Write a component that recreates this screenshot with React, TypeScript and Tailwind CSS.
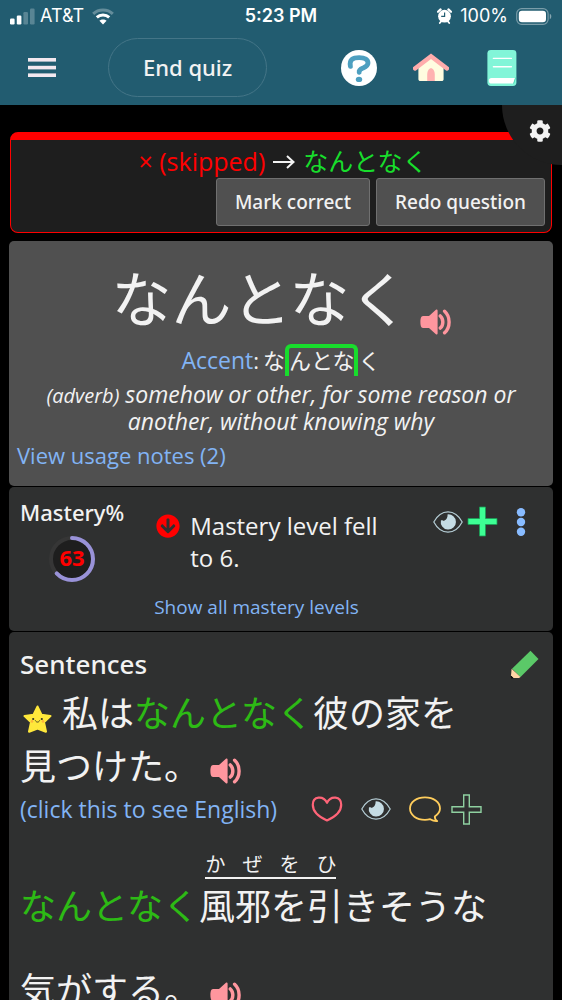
import React from 'react';
import { FaCog, FaArrowCircleDown } from 'react-icons/fa';

const MenuIcon: React.FC = () => (
  <svg width="28" height="20" viewBox="0 0 28 20" fill="#f3e8ef">
    <rect y="0" width="28" height="3.6" />
    <rect y="7.8" width="28" height="3.6" />
    <rect y="15.4" width="28" height="3.6" />
  </svg>
);

const SignalIcon: React.FC = () => (
  <svg width="26" height="17" viewBox="0 0 26 17" fill="#fff">
    <rect x="0" y="10.5" width="4.6" height="6" rx="1.2" />
    <rect x="6.8" y="7.5" width="4.6" height="9" rx="1.2" />
    <rect x="13.4" y="4" width="4.6" height="12.5" rx="1.2" opacity=".25" />
    <rect x="20" y="0.5" width="4.6" height="16" rx="1.2" opacity=".25" />
  </svg>
);

const WifiIcon: React.FC = () => (
  <svg width="22" height="17" viewBox="0 0 22 17" fill="none" strokeWidth="3">
    <path d="M1.2 5.8C6.5.7 15.5.7 20.8 5.8" stroke="#fff" opacity=".3" />
    <path d="M4.8 9.4C8.2 6.2 13.8 6.2 17.2 9.4" stroke="#fff" />
    <path d="M11 16.6 7.4 12.8C9.3 11 12.7 11 14.6 12.8Z" fill="#fff" />
  </svg>
);

const AlarmIcon: React.FC = () => (
  <svg width="15" height="16" viewBox="0 0 15 16">
    <circle cx="7.5" cy="8.2" r="6.4" fill="#fff" />
    <path d="M1 3.8 3.6 1.4M14 3.8 11.4 1.4" stroke="#fff" strokeWidth="2.2" strokeLinecap="round" />
    <path d="m2.8 15 1.6-2M12.2 15l-1.6-2" stroke="#fff" strokeWidth="1.8" strokeLinecap="round" />
    <path d="M7.6 4.4v4H4.2" fill="none" stroke="#225c70" strokeWidth="1.2" />
  </svg>
);

const BatteryIcon: React.FC = () => (
  <svg width="36" height="17" viewBox="0 0 36 17">
    <rect x=".7" y=".7" width="31.4" height="15.6" rx="5" fill="none" stroke="#fff" strokeWidth="1.2" opacity=".4" />
    <rect x="2.8" y="2.8" width="27.2" height="11.4" rx="3.2" fill="#fff" />
    <path d="M33.8 5.8v5.4c2-.8 2-4.6 0-5.4Z" fill="#fff" opacity=".45" />
  </svg>
);

const HelpIcon: React.FC = () => (
  <svg width="36" height="36" viewBox="0 0 36 36">
    <circle cx="18" cy="18" r="18" fill="#fff" />
    <path
      d="M9.4 16.4C8 9.4 12 7.6 18.2 7.6c5.8 0 8.8 2.2 8.8 5.4 0 3-2.6 4-5 5-2.6 1-4.2 2-3.8 4.4"
      fill="none"
      stroke="#4d9fc0"
      strokeWidth="4.8"
      strokeLinecap="round"
    />
    <ellipse cx="18" cy="29.4" rx="3.2" ry="2.6" fill="#4d9fc0" />
  </svg>
);

const HomeIcon: React.FC = () => (
  <svg width="36" height="29" viewBox="0 0 36 29">
    <path d="M18 3.5 30.6 13v13.2c0 1-.8 1.8-1.8 1.8H7.2c-1 0-1.8-.8-1.8-1.8V13Z" fill="#fffce0" />
    <path d="M14.2 28v-6c0-9 7.6-9 7.6 0v6Z" fill="#ffb1b1" />
    <path d="M2 15.4 18 3.2l16 12.2" fill="none" stroke="#ffacac" strokeWidth="4.4" strokeLinecap="round" />
  </svg>
);

const BookIcon: React.FC = () => (
  <svg width="30" height="36" viewBox="0 0 30 36">
    <rect x=".4" width="29" height="36" rx="3.4" fill="#82f5d8" />
    <path d="M6.4 8.4h18M6.4 16.8h18" stroke="#fff" strokeWidth="1.4" strokeLinecap="round" />
    <path d="M4.6 28h24c-1.4 1.6-1 3.4-2.4 5.6H4.6a2.8 2.8 0 0 1 0-5.6Z" fill="#fff" />
    <path d="m28.6 27.6-2 6" stroke="#28c7a0" strokeWidth=".7" />
  </svg>
);

const SpeakerIcon: React.FC = () => (
  <svg width="31" height="26" viewBox="0 0 31 26">
    <path d="M17.6 1.4v23.2c0 .9-1 1.2-1.7.6L9 19H3C1 19 .4 16.2.4 13S1 7 3 7h6L15.9.8c.7-.6 1.7-.3 1.7.6Z" fill="#ff969e" />
    <path
      d="M20.3 6.9c3.4 3 3.4 9.2 0 12.2M24.6 2.2c6 5.4 6 16.2 0 21.6"
      fill="none"
      stroke="#ff969e"
      strokeWidth="3.4"
      strokeLinecap="round"
    />
  </svg>
);

const EyeIcon: React.FC = () => (
  <svg width="30" height="22" viewBox="0 0 30 22">
    <path
      d="M.8 11C4.5 4 9.5.8 15 .8S25.5 4 29.2 11C25.5 18 20.5 21.2 15 21.2S4.5 18 .8 11Z"
      fill="none"
      stroke="#b5cdd5"
      strokeWidth="1.2"
    />
    <path d="M14.5 3.4a7.6 7.6 0 1 1-6.6 6c.8 0 1.8-.2 2.2.4 2.6-.4 4.8-2.6 4.4-6.4Z" fill="#c5dce4" />
  </svg>
);

const PlusIcon: React.FC = () => (
  <svg width="31" height="31" viewBox="0 0 31 31">
    <path d="M12.5 1h6v11.5H30v6H18.5V30h-6V18.5H1v-6h11.5Z" fill="#3dff94" stroke="#1c9b56" strokeWidth=".8" />
  </svg>
);

const PlusOutlineIcon: React.FC = () => (
  <svg width="31" height="31" viewBox="0 0 31 31">
    <path
      d="M12.7 1h5.6v11.7H30v5.6H18.3V30h-5.6V18.3H1v-5.6h11.7Z"
      fill="none"
      stroke="#8fd0a0"
      strokeWidth="1.4"
    />
  </svg>
);

const DotsIcon: React.FC = () => (
  <svg width="10" height="28" viewBox="0 0 10 28" fill="#88bbff">
    <circle cx="5" cy="4.2" r="4.2" />
    <circle cx="5" cy="14" r="4.2" />
    <circle cx="5" cy="23.8" r="4.2" />
  </svg>
);

const PencilIcon: React.FC = () => (
  <svg width="29" height="29" viewBox="0 0 29 29">
    <path d="M20.5.8 28.5 9 10.5 27 2 18.8Z" fill="#5bc968" />
    <path d="M1.6 18.8 10.5 27 9 28H.8Z" fill="#ffd6a6" />
    <path d="m1 26 2.2 2H1Z" fill="#111" stroke="#111" />
  </svg>
);

const StarIcon: React.FC = () => (
  <svg width="29" height="28" viewBox="0 0 29 28">
    <path
      d="M14.5 1.6 18.4 9.8l9 1.2-6.5 6.2 2 9.4-8.4-3.2-8.4 3.2 2-9.4L1.6 11l9-1.2Z"
      fill="#ffe83b"
      stroke="#ffe83b"
      strokeWidth="2.2"
      strokeLinejoin="round"
    />
    <circle cx="10.2" cy="14" r="1.1" fill="#332" />
    <circle cx="18.8" cy="14" r="1.1" fill="#332" />
    <path d="M12.3 15.4c.8 2.2 3.6 2.2 4.4 0" fill="none" stroke="#332" strokeWidth=".9" />
    <circle cx="9" cy="16.4" r="1.3" fill="#ffb63b" />
    <circle cx="20" cy="16.4" r="1.3" fill="#ffb63b" />
  </svg>
);

const HeartIcon: React.FC = () => (
  <svg width="32" height="26" viewBox="0 0 32 26">
    <path
      d="M16 6.8C12.4-.6 1.8-.2 1.8 8.8c0 7.2 7.2 12.6 14.2 15.6 7-3 14.2-8.4 14.2-15.6C30.2-.2 19.6-.6 16 6.8Z"
      fill="none"
      stroke="#ff6478"
      strokeWidth="2.2"
      strokeLinejoin="round"
    />
  </svg>
);

const CommentIcon: React.FC = () => (
  <svg width="32" height="27" viewBox="0 0 32 27">
    <path
      d="M25.8 20.6C28.8 18.6 31 16 31 12.6 31 6 24.4 1.4 16 1.4S1 6 1 12.6s6.6 11.2 15 11.2c1.8 0 3.6-.2 5.2-.6 2 1.2 4.6 2 7 1.8-1.6-.8-2.4-2.2-2.4-4.4Z"
      fill="none"
      stroke="#ffcd5c"
      strokeWidth="1.8"
      strokeLinejoin="round"
    />
  </svg>
);

const MasteryRing: React.FC<{ value: number }> = ({ value }) => (
  <div className="grid size-12 place-items-center">
    <svg width="48" height="48" viewBox="0 0 48 48" className="col-start-1 row-start-1">
      <circle cx="24" cy="24" r="21" fill="#1e1e1e" stroke="#363636" strokeWidth="4" />
      <circle
        cx="24"
        cy="24"
        r="21"
        fill="none"
        stroke="#9992d8"
        strokeWidth="4"
        strokeLinecap="round"
        pathLength="100"
        strokeDasharray={`${value} 100`}
        transform="rotate(-90 24 24)"
      />
    </svg>
    <span className="col-start-1 row-start-1 pb-1 text-[22px] leading-6 font-bold text-[#ff0000]">{value}</span>
  </div>
);

const Header: React.FC = () => (
  <header className="shrink-0 bg-[#225c70]">
    <div className="grid grid-cols-3 items-center px-[10px] pt-1 font-['Inter',sans-serif] text-lg leading-6 text-white">
      <div className="flex items-center gap-2">
        <SignalIcon />
        <span className="-ml-1">AT&amp;T</span>
        <WifiIcon />
      </div>
      <div className="text-center font-semibold">5:23 PM</div>
      <div className="flex items-center justify-end gap-2">
        <AlarmIcon />
        <span>100%</span>
        <BatteryIcon />
      </div>
    </div>
    <nav className="flex items-center justify-between pt-[10px] pr-[45px] pb-2 pl-7">
      <div className="flex items-center gap-[52px]">
        <button aria-label="Menu">
          <MenuIcon />
        </button>
        <button className="h-[59px] rounded-full border border-[#447587] px-[34px] font-['Noto_Sans',sans-serif] text-[22px] font-medium text-[#f2f2f2]">
          End quiz
        </button>
      </div>
      <div className="flex items-center gap-9">
        <button aria-label="Help">
          <HelpIcon />
        </button>
        <a href="#home" aria-label="Home">
          <HomeIcon />
        </a>
        <a href="#notes" aria-label="Notebook" className="pl-[2px]">
          <BookIcon />
        </a>
      </div>
    </nav>
  </header>
);

const Result: React.FC = () => (
  <section className="mx-[10px] rounded-lg border border-t-8 border-[#ff0000] bg-[#1e1e1e] px-[6px] pt-[5px] pb-[6px]">
    <p className="flex items-center justify-center gap-2 pl-1 text-[25px] leading-[33px] text-[#ff0000]">
      <span>× (skipped)</span>
      <svg width="22" height="14" viewBox="0 0 22 14" fill="none" stroke="#f2f2f2" strokeWidth="2">
        <path d="M0 7h20M14 1l6.5 6-6.5 6" />
      </svg>
      <span className="text-[#18dd2c]">なんとなく</span>
    </p>
    <div className="flex justify-end gap-[6px] font-['Noto_Sans',sans-serif] text-[19px] font-medium text-[#f2f2f2]">
      <button className="h-12 rounded-[3px] border border-[#707070] bg-[#505050] px-[18px]">Mark correct</button>
      <button className="h-12 rounded-[3px] border border-[#707070] bg-[#505050] px-[18px]">Redo question</button>
    </div>
  </section>
);

const Word: React.FC = () => (
  <section className="rounded-[5px] bg-[#505050] px-2 pt-4 pb-4">
    <div className="flex items-end justify-center gap-[10px]">
      <h1 className="text-[60px] leading-[84px]">なんとなく</h1>
      <button aria-label="Play word" className="pb-[6px]">
        <SpeakerIcon />
      </button>
    </div>
    <p className="flex items-start justify-center pt-[3px] text-[22px] leading-8">
      <a href="#accent" className="text-[23px] text-[#82b4f5]">
        Accent
      </a>
      <span className="mr-1">:</span>
      <span>な</span>
      <span className="rounded-t-md border-4 border-b-0 border-[#18dd2c] pb-1 leading-6">んとな</span>
      <span>く</span>
    </p>
    <p className="pt-[5px] text-center text-[23px] leading-[27px] italic">
      <span className="text-xl leading-5">(adverb)</span> somehow or other, for some reason or another, without knowing why
    </p>
    <a href="#usage" className="mt-[5px] inline-block text-[22px] leading-[30px] text-[#82b4f5]">
      View usage notes (2)
    </a>
  </section>
);

const Mastery: React.FC = () => (
  <section className="mt-px flex items-start rounded-[5px] bg-[#2f3030] px-[11px] pt-[11px] pb-2">
    <div className="flex flex-col items-center gap-[9px]">
      <h2 className="font-['Noto_Sans',sans-serif] text-[22px] leading-7 font-medium">Mastery%</h2>
      <MasteryRing value={63} />
    </div>
    <div className="ml-[30px] flex-1 pt-3">
      <div className="flex gap-[10px]">
        <FaArrowCircleDown size={24} color="#ff0000" className="mt-1 ml-[2px] shrink-0" />
        <p className="max-w-[200px] text-2xl leading-8">Mastery level fell to 6.</p>
      </div>
      <a href="#levels" className="mt-[17px] inline-block text-[19px] leading-8 text-[#82b4f5]">
        Show all mastery levels
      </a>
    </div>
    <div className="flex items-center gap-1 pt-2 pr-4">
      <button aria-label="Watch">
        <EyeIcon />
      </button>
      <button aria-label="Add">
        <PlusIcon />
      </button>
      <button aria-label="More" className="ml-[14px]">
        <DotsIcon />
      </button>
    </div>
  </section>
);

const Sentences: React.FC = () => (
  <section className="mt-px rounded-[5px] bg-[#2f3030] px-[11px] pt-4 pb-8">
    <div className="flex items-center justify-between pr-[3px]">
      <h2 className="font-['Noto_Sans',sans-serif] text-[26px] leading-8 font-medium">Sentences</h2>
      <button aria-label="Edit sentences">
        <PencilIcon />
      </button>
    </div>
    <p className="pt-[7px] text-[36px] leading-[53px]">
      <span className="mr-[10px] ml-[3px] inline-block align-[-6px]">
        <StarIcon />
      </span>
      私は<span className="text-[#2dba15]">なんとなく</span>彼の家を
      <br />
      見つけた。
      <button aria-label="Play sentence" className="ml-[10px] align-[-4px]">
        <SpeakerIcon />
      </button>
    </p>
    <div className="flex items-center">
      <button className="text-[23px] leading-8 text-[#82b4f5]">(click this to see English)</button>
      <div className="ml-[34px] flex items-center gap-[18px]">
        <button aria-label="Like">
          <HeartIcon />
        </button>
        <button aria-label="Watch sentence">
          <EyeIcon />
        </button>
        <button aria-label="Comment">
          <CommentIcon />
        </button>
        <button aria-label="Add sentence" className="-ml-2">
          <PlusOutlineIcon />
        </button>
      </div>
    </div>
    <div className="mt-7 text-[36px] leading-[56px]">
      <div className="flex items-end">
        <span className="text-[#2dba15]">なんとなく</span>
        <span className="flex flex-col items-center">
          <span className="flex w-[131px] justify-between border-b-2 border-[#f2f2f2] text-xl leading-6">
            <span>か</span>
            <span>ぜ</span>
            <span>を</span>
            <span>ひ</span>
          </span>
          <span>風邪を引</span>
        </span>
        <span>きそうな</span>
      </div>
      <div className="pt-7">
        気がする。
        <button aria-label="Play second sentence" className="ml-[10px] align-[-4px]">
          <SpeakerIcon />
        </button>
      </div>
    </div>
  </section>
);

export default function App() {
  return (
    <div className="relative flex h-screen flex-col bg-black font-['Open_Sans','Noto_Sans_CJK_JP',sans-serif] text-[#f2f2f2]">
      <Header />
      <main className="relative min-h-0 flex-1 overflow-y-auto pt-[27px] [scrollbar-width:none]">
        <Result />
        <button
          aria-label="Settings"
          className="absolute top-0 right-0 grid size-[60px] place-items-center rounded-bl-full bg-[#1e1e1e] pb-2 pl-4"
        >
          <FaCog size={22} />
        </button>
        <div className="mx-[9px] mt-2">
          <Word />
          <Mastery />
          <Sentences />
        </div>
      </main>
    </div>
  );
}
